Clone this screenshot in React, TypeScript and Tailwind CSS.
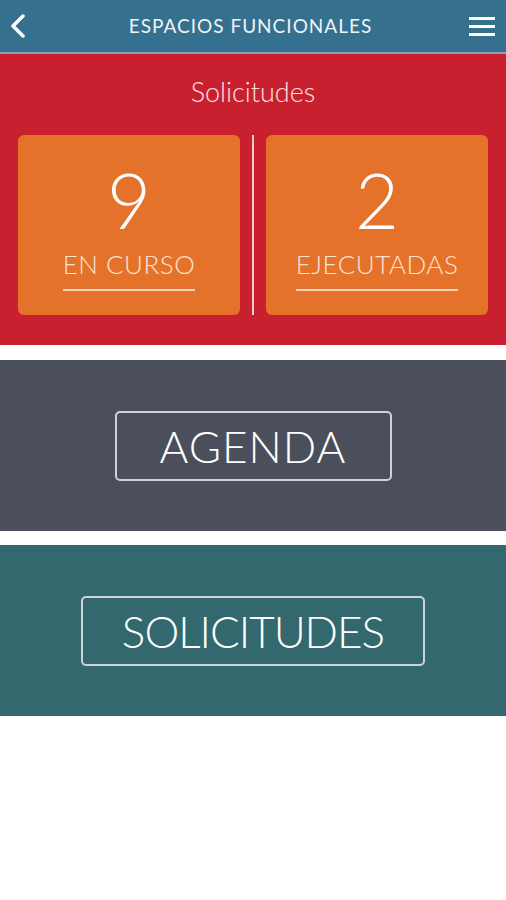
import React from 'react';

const font = { fontFamily: '"Lato", "Open Sans", "Liberation Sans", sans-serif' };

const Counter = ({ value, label }: { value: number; label: string }) => (
  <div className="flex-1 h-[180px] bg-[#e4722b] rounded-[6px] flex flex-col items-center">
    <div className="mt-[30px] h-[70px] flex items-center text-[76px] font-light leading-none text-white">{value}</div>
    <div className="mt-[16px] inline-flex flex-col items-stretch">
      <span className="text-[26px] font-light leading-none text-[#fbe3d2] tracking-[0.5px]">{label}</span>
      <span className="mt-[12px] h-[2px] bg-[#f6d4bc]" />
    </div>
  </div>
);

const BigButton = ({ label, bg, w, track }: { label: string; bg: string; w: string; track: string }) => (
  <div className={`${bg} h-[171px] flex items-center justify-center`}>
    <div className={`${w} ${track} h-[70px] border-2 border-[#cdd3d8] rounded-[5px] flex items-center justify-center text-[44px] font-light leading-none text-white`}>
      {label}
    </div>
  </div>
);

export default function App() {
  return (
    <div className="w-[506px] h-[900px] bg-white flex flex-col" style={font}>
      {/* Top bar */}
      <div className="h-[52px] bg-[#35708f] flex items-center justify-between px-[10px] shrink-0">
        <svg width="16" height="24" viewBox="0 0 16 24" fill="none">
          <path d="M13 2 L3 12 L13 22" stroke="white" strokeWidth="3.5" strokeLinecap="round" strokeLinejoin="round" />
        </svg>
        <div className="text-[19px] text-[#eef3f6] tracking-[1px] ml-[6px]">ESPACIOS FUNCIONALES</div>
        <div className="flex flex-col gap-[5px] w-[26px] mr-[1px]">
          <div className="h-[3px] bg-white" />
          <div className="h-[3px] bg-white" />
          <div className="h-[3px] bg-white" />
        </div>
      </div>
      <div className="h-[2px] bg-[#8aa3b4]" />

      {/* Requests summary */}
      <div className="h-[291px] bg-[#c8202f] flex flex-col items-center shrink-0">
        <div className="mt-[24px] text-[27px] font-light leading-none text-[#fbe0e2]">Solicitudes</div>
        <div className="mt-[30px] w-full px-[18px] flex items-stretch gap-[12px]">
          <Counter value={9} label="EN CURSO" />
          <div className="w-[2px] bg-[#f3c9cc]" />
          <Counter value={2} label="EJECUTADAS" />
        </div>
      </div>

      <div className="h-[15px] shrink-0" />
      <BigButton label="AGENDA" bg="bg-[#4a4f5b]" w="w-[277px]" track="tracking-[1px]" />
      <div className="h-[14px] shrink-0" />
      <BigButton label="SOLICITUDES" bg="bg-[#33696e]" w="w-[344px]" track="tracking-[-1px]" />
    </div>
  );
}
